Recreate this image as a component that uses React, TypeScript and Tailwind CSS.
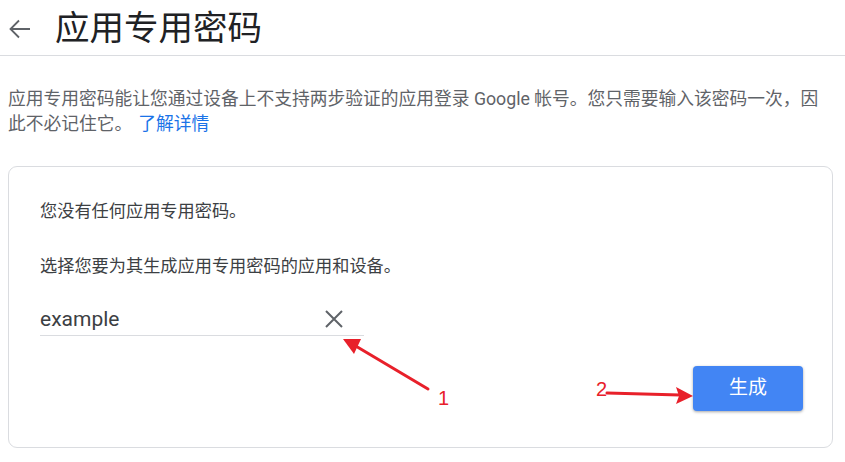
import React from "react";

const font = { fontFamily: "Roboto, 'Noto Sans CJK SC', sans-serif" };

function BackArrow() {
  return (
    <svg width="24" height="24" viewBox="0 0 24 24" className="text-[#5f6368]">
      <path d="M22 12H3.5M11 3.5L2.5 12l8.5 8.5" fill="none" stroke="currentColor" strokeWidth="1.8" />
    </svg>
  );
}

function CloseIcon() {
  return (
    <svg width="20" height="18" viewBox="0 0 20 18" className="text-[#5f6368]">
      <path d="M2 1l16 16M18 1L2 17" fill="none" stroke="currentColor" strokeWidth="2" />
    </svg>
  );
}

// red annotation arrows drawn over the screenshot
function Annotations() {
  return (
    <div className="pointer-events-none absolute inset-0">
      <svg width="845" height="462" className="absolute left-0 top-0">
        <line x1="428" y1="389" x2="354" y2="345" stroke="#e8202a" strokeWidth="3" strokeLinecap="round" />
        <polygon points="343,339 361,339 354,354" fill="#e8202a" />
        <line x1="607" y1="393" x2="680" y2="395" stroke="#e8202a" strokeWidth="3" strokeLinecap="round" />
        <polygon points="693,396 676,387 679,396 676,404" fill="#e8202a" />
      </svg>
      <span className="absolute left-[438px] top-[386px] text-[20px] leading-[24px] text-[#e8202a]" style={{ fontFamily: "'Liberation Sans', sans-serif" }}>
        1
      </span>
      <span className="absolute left-[596px] top-[377px] text-[20px] leading-[24px] text-[#e8202a]" style={{ fontFamily: "'Liberation Sans', sans-serif" }}>
        2
      </span>
    </div>
  );
}

export default function App() {
  return (
    <div className="relative h-[462px] w-[845px] overflow-hidden bg-white" style={font}>
      <div className="flex h-[56px] items-center border-b border-[#dadce0] pl-[8px]">
        <div className="mt-[3px] flex w-[47px]">
          <BackArrow />
        </div>
        <h1 className="text-[34.5px] font-normal leading-[44px] text-[#202124]">应用专用密码</h1>
      </div>

      <div className="mt-[31px] w-[828px] px-[8px] text-[17.75px] leading-[25px] text-[#5f6368]">
        <span>应用专用密码能让您通过设备上不支持两步验证的应用登录 Google 帐号。您只需要输入该密码一次，因</span>
        <br />
        <span>此不必记住它。</span>
        <a className="ml-[6px] text-[#1a73e8]">了解详情</a>
      </div>

      <div className="mx-[8px] mt-[29px] w-[825px] rounded-[9px] border border-[#dadce0] pb-[36px] pl-[31px] pr-[29px] pt-[32px]">
        <p className="text-[17.2px] leading-[25px] text-[#3c4043]">您没有任何应用专用密码。</p>
        <p className="mt-[30px] text-[17.2px] leading-[25px] text-[#3c4043]">选择您要为其生成应用专用密码的应用和设备。</p>

        <div className="mt-[23px] flex h-[34px] w-[324px] items-center justify-between border-b border-[#dadce0]">
          <span className="text-[21px] leading-[28px] text-[#3c4043]">example</span>
          <span className="mr-[20px] flex">
            <CloseIcon />
          </span>
        </div>

        <div className="mt-[30px] flex justify-end">
          <button className="h-[45px] w-[110px] rounded-[4px] bg-[#4285f4] text-[19px] text-white shadow-[0_1px_3px_rgba(0,0,0,0.35)]">
            生成
          </button>
        </div>
      </div>

      <Annotations />
    </div>
  );
}
